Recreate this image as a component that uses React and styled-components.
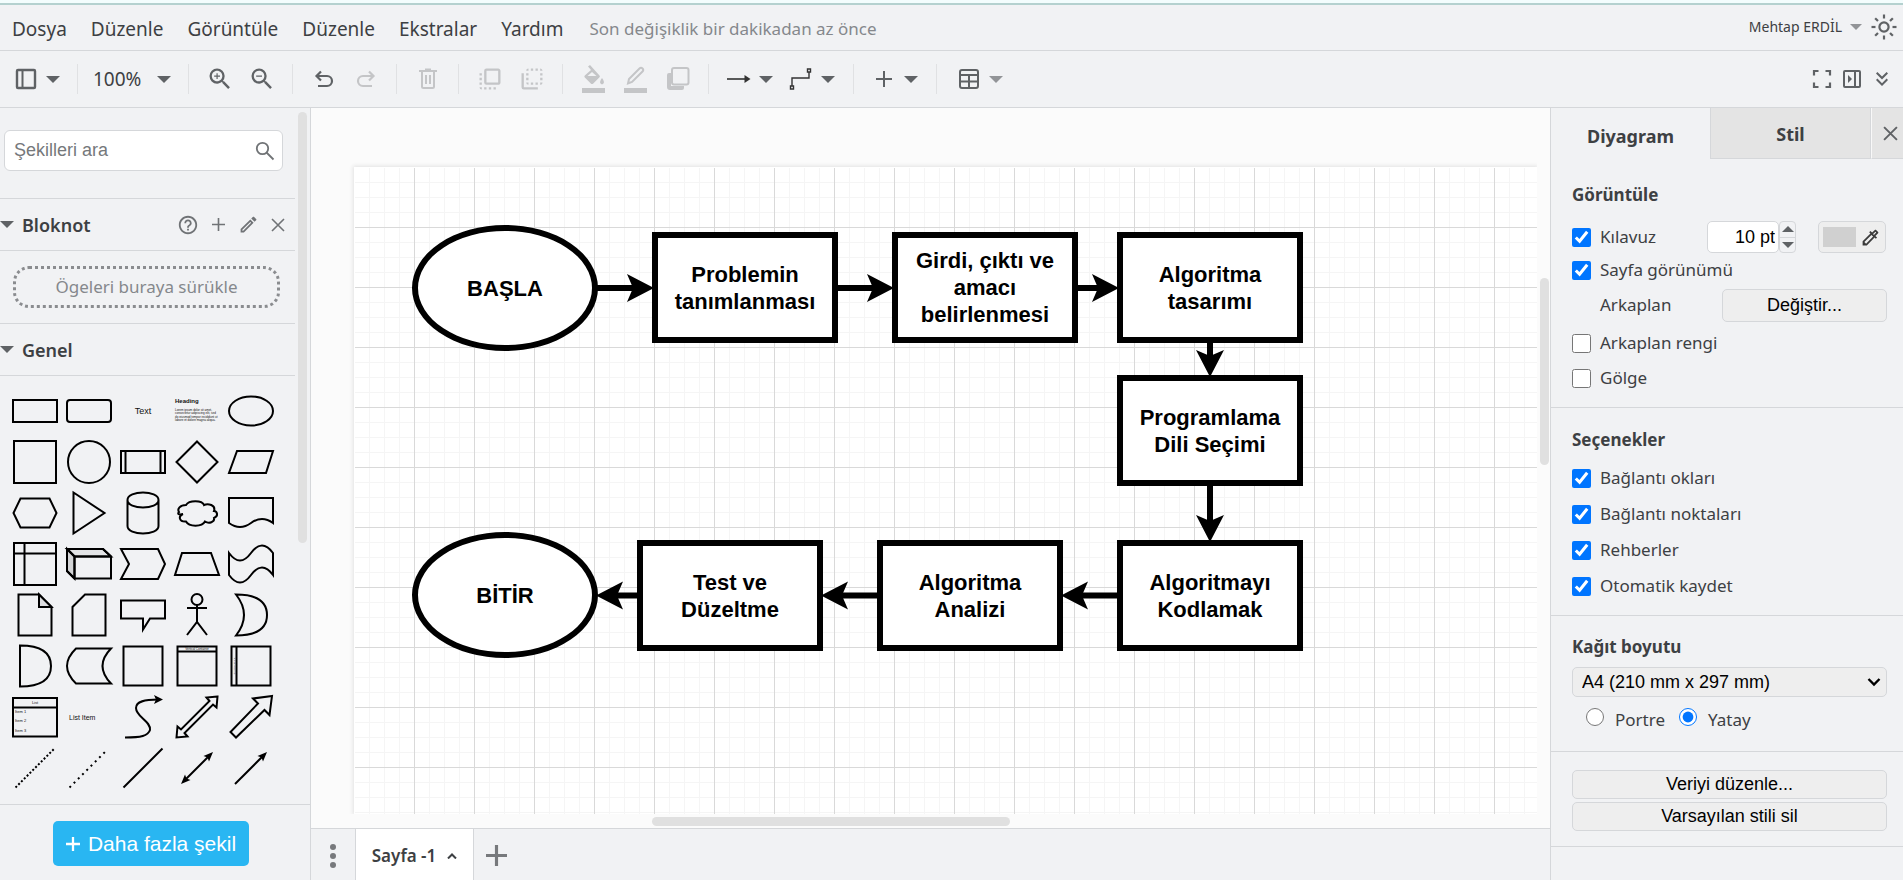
import React, { useState } from "react";
import styled, { createGlobalStyle, css } from "styled-components";
import {
  MdZoomIn,
  MdZoomOut,
  MdFlipToFront,
  MdFlipToBack,
  MdKeyboardDoubleArrowDown,
  MdHelpOutline,
  MdOutlineEdit,
  MdOutlineColorize,
} from "react-icons/md";

const color = {
  chrome: "#f1f2f4",
  canvas: "#fbfbfb",
  line: "#d5d7da",
  soft: "#e0e1e3",
  text: "#3d4043",
  muted: "#85888c",
  icon: "#5f6265",
  off: "#c4c5c7",
  field: "#eeeeee",
  accent: "#29b6f2",
};

const uiFont = `"Noto Sans", "Open Sans", sans-serif`;
const formFont = `"Liberation Sans", Arial, sans-serif`;

const GlobalStyle = createGlobalStyle`
  *, *::before, *::after { box-sizing: border-box; }
  body { margin: 0; background: ${color.chrome}; color: ${color.text}; font-family: ${uiFont}; }
  button, input, select { font: inherit; color: inherit; margin: 0; }
`;

const Shell = styled.div`
  display: flex;
  flex-direction: column;
  height: 100vh;
  overflow: hidden;
  border-top: 3px solid #f3fdfd;
`;

const PlainButton = styled.button`
  display: inline-flex;
  align-items: center;
  justify-content: center;
  padding: 0;
  border: 0;
  background: none;
  cursor: pointer;
`;

/* ---------- menu bar ---------- */

const MenuBar = styled.header`
  display: flex;
  flex: 0 0 48px;
  align-items: center;
  justify-content: space-between;
  padding: 0 5px 0 12px;
  border-top: 2px solid #b4d1cf;
  border-bottom: 1px solid ${color.line};
`;

const MenuNav = styled.nav`
  display: flex;
  align-items: center;
  gap: 24px;
  padding-top: 2px;
`;

const MenuItem = styled(PlainButton)`
  font-size: 19px;
  line-height: 28px;
`;

const SaveStatus = styled.span`
  margin-left: 2px;
  color: ${color.muted};
  font-size: 17px;
  line-height: 28px;
`;

const Account = styled.div`
  display: flex;
  align-items: center;
  gap: 8px;
  padding-bottom: 1px;
`;

const UserButton = styled(PlainButton)`
  gap: 8px;
  font-size: 14px;
  line-height: 20px;
`;

/* ---------- toolbar ---------- */

const Toolbar = styled.div`
  display: flex;
  flex: 0 0 57px;
  align-items: center;
  border-bottom: 1px solid ${color.line};
  color: ${color.icon};
`;

const ToolGroup = styled.div`
  display: flex;
  align-items: center;
  height: 30px;
  gap: ${(p) => p.$gap || 0}px;
  padding: 0 ${(p) => p.$right ?? 9}px 0 ${(p) => p.$left ?? 10}px;
  border-right: ${(p) => (p.$last ? 0 : 1)}px solid ${color.soft};
`;

const ToolButton = styled(PlainButton)`
  width: ${(p) => p.$width || 42}px;
  height: 30px;
  color: ${color.icon};
  &:disabled { color: ${color.off}; }
`;

const DropButton = styled(PlainButton)`
  gap: 8px;
  height: 30px;
`;

const IconSlot = styled.span`
  display: inline-flex;
  justify-content: center;
  width: 24px;
`;

const ZoomText = styled.span`
  width: 50px;
  margin-right: 6px;
  color: ${color.text};
  font-size: 19px;
  line-height: 28px;
  text-align: left;
`;

const ToolbarEnd = styled.div`
  display: flex;
  align-items: center;
  margin-left: auto;
  padding-right: 6px;
`;

/* ---------- body ---------- */

const Body = styled.div`
  display: flex;
  flex: 1;
  min-height: 0;
`;

const Sidebar = styled.aside`
  display: flex;
  flex: 0 0 311px;
  flex-direction: column;
  border-right: 1px solid ${color.line};
`;

const SidebarScroll = styled.div`
  display: flex;
  flex: 1;
  min-height: 0;
`;

const SidebarContent = styled.div`
  flex: 1;
  min-width: 0;
  overflow: hidden;
`;

const SidebarTrack = styled.div`
  display: grid;
  grid-template-rows: 4px 430fr 261fr;
  width: 15px;
  padding: 0 3px;
`;

const Thumb = styled.div`
  grid-area: ${(p) => p.$area};
  border-radius: 5px;
  background: #e0e0e0;
`;

const SearchBox = styled.label`
  display: flex;
  align-items: center;
  height: 41px;
  margin: 22px 12px 27px 4px;
  padding: 0 7px 0 9px;
  border: 1px solid ${color.line};
  border-radius: 6px;
  background: #fff;
  color: #707376;
`;

const SearchInput = styled.input`
  flex: 1;
  min-width: 0;
  padding: 0;
  border: 0;
  outline: 0;
  color: ${color.text};
  font-family: ${formFont};
  font-size: 18px;
  &::placeholder { color: #75787b; opacity: 1; }
`;

const SectionBar = styled.div`
  display: flex;
  align-items: center;
  justify-content: space-between;
  height: 53px;
  padding-right: 6px;
  border-top: 1px solid ${color.line};
  border-bottom: 1px solid ${color.line};
`;

const SectionToggle = styled(PlainButton)`
  gap: 8px;
  font-size: 18px;
  font-weight: 600;
  line-height: 28px;
`;

const SectionActions = styled.div`
  display: flex;
  align-items: center;
  gap: 8px;
  color: #707376;
`;

const ActionButton = styled(PlainButton)`
  width: 22px;
  height: 24px;
  color: inherit;
`;

const DropZone = styled.div`
  margin: 15px 15px 15px 13px;
  border: 3px dotted #8a8c8f;
  border-radius: 16px;
  color: ${color.muted};
  font-size: 17px;
  line-height: 36px;
  text-align: center;
`;

const ShapeGrid = styled.div`
  display: grid;
  grid-template-columns: repeat(5, 54px);
  padding: 9px 0 0 8px;
`;

const ShapeButton = styled(PlainButton)`
  height: 51px;
`;

const ShapeSvg = styled.svg`
  display: block;
  overflow: visible;
  fill: none;
  stroke: #000;
  stroke-width: 2;
  text {
    fill: #111;
    stroke: none;
    font-family: ${formFont};
  }
`;

const SidebarFooter = styled.div`
  display: flex;
  flex: 0 0 76px;
  justify-content: center;
  padding: 16px 8px 14px 0;
  border-top: 1px solid ${color.line};
`;

const MoreShapes = styled(PlainButton)`
  gap: 8px;
  width: 196px;
  border-radius: 5px;
  background: ${color.accent};
  color: #fff;
  font-family: ${formFont};
  font-size: 21px;
`;

/* ---------- canvas ---------- */

const CanvasColumn = styled.main`
  display: flex;
  flex: 1;
  flex-direction: column;
  min-width: 0;
  background: ${color.canvas};
`;

const Workspace = styled.div`
  display: grid;
  flex: 1;
  grid-template-columns: minmax(0, 1fr) 13px;
  grid-template-rows: minmax(0, 1fr) 14px;
  min-height: 0;
`;

const PageViewport = styled.div`
  overflow: hidden;
  padding: 59px 0 0 43px;
`;

const Page = styled.div`
  position: relative;
  height: 100%;
  overflow: hidden;
  border: solid #fff;
  border-width: 1px 0 0 1px;
  box-shadow: 0 0 4px 1px #e2e2e2;
  background-color: #fff;
  background-image:
    linear-gradient(to right, #d9d9d9 1px, transparent 1px),
    linear-gradient(to bottom, #d9d9d9 1px, transparent 1px),
    linear-gradient(to right, #f5f5f5 1px, transparent 1px),
    linear-gradient(to bottom, #f5f5f5 1px, transparent 1px);
  background-size: 60px 60px, 60px 60px, 15px 15px, 15px 15px;
  background-origin: border-box;
`;

const VerticalTrack = styled.div`
  display: grid;
  grid-template-rows: 170fr 187fr 349fr;
  padding: 0 1px 0 3px;
`;

const HorizontalTrack = styled.div`
  display: grid;
  grid-template-columns: 341fr 358fr 527fr;
  padding: 3px 0 2px;
`;

const Edges = styled.svg`
  position: absolute;
  top: -1px;
  left: -1px;
  width: 100%;
  height: 100%;
  overflow: visible;
`;

const Node = styled.div`
  position: absolute;
  top: ${(p) => p.$y - 1}px;
  left: ${(p) => p.$x - 1}px;
  display: flex;
  align-items: center;
  justify-content: center;
  width: 186px;
  height: 111px;
  border: 6px solid #000;
  background: #fff;
  color: #000;
  font-family: ${formFont};
  font-size: 22px;
  font-weight: 700;
  line-height: 27px;
  text-align: center;
  white-space: pre-line;
  ${(p) =>
    p.$round &&
    css`
      height: 126px;
      border-radius: 50%;
    `}
`;

const PageTabs = styled.footer`
  display: flex;
  flex: 0 0 52px;
  align-items: stretch;
  border-top: 1px solid ${color.line};
  background: ${color.chrome};
`;

const PageMenuButton = styled(PlainButton)`
  width: 44px;
  padding-top: 2px;
  color: #77797c;
`;

const PageTab = styled(PlainButton)`
  gap: 11px;
  width: 119px;
  padding-top: 2px;
  border-right: 1px solid ${color.line};
  border-left: 1px solid ${color.line};
  background: #fff;
  font-size: 17px;
  font-weight: 600;
`;

const AddPage = styled(PlainButton)`
  width: 44px;
  padding-top: 2px;
  color: #77797c;
`;

/* ---------- format panel ---------- */

const Panel = styled.aside`
  flex: 0 0 353px;
  overflow: hidden;
  border-left: 1px solid ${color.line};
`;

const Tabs = styled.div`
  display: flex;
  height: 51px;
`;

const Tab = styled(PlainButton)`
  flex: 1;
  padding-top: ${(p) => (p.$active ? 4 : 2)}px;
  font-size: 18px;
  font-weight: 700;
  ${(p) =>
    !p.$active &&
    css`
      border: solid ${color.line};
      border-width: 0 1px 1px;
      background: #e4e4e4;
    `}
`;

const CloseTab = styled(PlainButton)`
  width: 32px;
  padding-left: 6px;
  border-bottom: 1px solid ${color.line};
  border-left: 1px solid #f8f8f8;
  background: #e4e4e4;
  color: ${color.icon};
`;

const PanelSection = styled.section`
  padding: ${(p) => p.$top}px 16px ${(p) => p.$bottom}px 21px;
  border-bottom: 1px solid ${color.line};
`;

const PanelHeading = styled.h2`
  margin: 0 0 ${(p) => p.$gap || 2}px;
  font-size: 17px;
  font-weight: 700;
  line-height: 36px;
`;

const OptionRow = styled.div`
  display: flex;
  align-items: center;
  height: ${(p) => p.$height || 36}px;
`;

const Option = styled.label`
  display: flex;
  flex: 1;
  align-items: center;
  gap: 9px;
  font-size: 17px;
  line-height: 24px;
`;

const Check = styled.input.attrs({ type: "checkbox" })`
  width: 19px;
  height: 19px;
`;

const RowCaption = styled.span`
  flex: 1;
  padding-left: 28px;
  font-size: 17px;
  line-height: 24px;
`;

const SizeInput = styled.input`
  width: 72px;
  height: 32px;
  padding: 0 3px;
  border: 1px solid ${color.line};
  border-radius: 5px;
  background: #fff;
  color: #000;
  font-family: ${formFont};
  font-size: 18px;
  text-align: right;
`;

const Spinner = styled.div`
  display: flex;
  flex-direction: column;
  width: 17px;
  height: 32px;
  margin-right: 22px;
  border: 1px solid ${color.line};
  border-radius: 4px;
`;

const SpinButton = styled(PlainButton)`
  flex: 1;
  & + & { border-top: 1px solid ${color.line}; }
`;

const ColorButton = styled(PlainButton)`
  gap: 4px;
  width: 68px;
  height: 32px;
  margin-right: 1px;
  border: 1px solid ${color.line};
  border-radius: 5px;
  background: ${color.field};
  color: #3a3a3a;
`;

const Swatch = styled.span`
  width: 33px;
  height: 20px;
  background: #d0d0d0;
`;

const FormButton = styled(PlainButton)`
  width: ${(p) => p.$width || "100%"};
  height: ${(p) => p.$height || 29}px;
  border: 1px solid ${color.line};
  border-radius: 5px;
  background: ${color.field};
  color: #000;
  font-family: ${formFont};
  font-size: 18px;
  & + & { margin-top: 3px; }
`;

const SelectWrap = styled.div`
  display: grid;
  grid-template-columns: 1fr 14px 6px;
  align-items: center;
  color: #000;
  svg { grid-area: 1 / 2; pointer-events: none; }
`;

const PaperSelect = styled.select`
  grid-area: 1 / 1 / 2 / 4;
  height: 30px;
  padding: 0 24px 0 9px;
  border: 1px solid ${color.line};
  border-radius: 5px;
  appearance: none;
  background-color: ${color.field};
  color: #000;
  font-family: ${formFont};
  font-size: 18px;
`;

const RadioRow = styled.div`
  display: flex;
  gap: 14px;
  height: 40px;
  padding: 5px 0 0 14px;
`;

const RadioOption = styled.label`
  display: flex;
  align-items: center;
  gap: 11px;
  font-size: 17px;
  line-height: 24px;
`;

const Radio = styled.input.attrs({ type: "radio" })`
  width: 18px;
  height: 18px;
  margin-bottom: 6px;
`;

/* ---------- small drawings ---------- */

const Caret = ({ size = 14, fill = color.icon, up }) => (
  <svg width={size} height={size / 2} viewBox="0 0 14 7">
    <path d={up ? "M0 7h14L7 0z" : "M0 0h14L7 7z"} fill={fill} />
  </svg>
);

const Line = ({ w = 22, h = w, box = `0 0 ${w} ${h}`, sw = 2, children }) => (
  <svg width={w} height={h} viewBox={box} fill="none" stroke="currentColor" strokeWidth={sw}>
    {children}
  </svg>
);

const LayoutIcon = () => (
  <Line>
    <rect x="2" y="2" width="18" height="18" rx="1" strokeWidth="2.4" />
    <path d="M7.5 2v18" />
  </Line>
);
const UndoIcon = ({ flip }) => (
  <Line w={20} h={18} sw={2.2}>
    <g transform={flip ? "matrix(-1 0 0 1 20 0)" : undefined}>
      <path d="M7 1.5 2.5 6 7 10.500M3 6h10a5 5 0 0 1 0 10H4" />
    </g>
  </Line>
);
const TrashIcon = () => (
  <Line w={20} h={22}>
    <path d="M1 3h18M7 1.500h6M4 3v15.500q0 1.500 1.500 1.500h9q1.500 0 1.500-1.500V3M8 7v9M12 7v9" />
  </Line>
);
const FillIcon = () => (
  <svg width="24" height="28" viewBox="0 0 24 28" fill="currentColor">
    <path d="M6 1.500 8 0l9.500 10.500q1 1-.2 2l-6 6q-1.300 1-2.500 0l-6-6q-1-1 0-2L9 5zM10 7l-4.500 4h9z" />
    <path d="M20 13q4 5 0 6.500q-4-1.500 0-6.500z" />
    <path d="M0 23h23v5H0z" />
  </svg>
);
const PenIcon = () => (
  <svg width="24" height="28" viewBox="0 0 24 28">
    <path d="M4 18.500 5 14 15.500 3.500q1.500-1.500 3 0t0 3L8 17z" fill="none" stroke="currentColor" strokeWidth="2" />
    <path d="M0 23h23v5H0z" fill="currentColor" />
  </svg>
);
const ShadowIcon = () => (
  <svg width="24" height="24" viewBox="0 0 24 24">
    <rect x="6" y="1" width="16.500" height="16.500" rx="2" fill="none" stroke="currentColor" strokeWidth="2" />
    <path d="M1 8q0-2 2-2h2v13h13v2q0 2-2 2H4q-3 0-3-3z" fill="currentColor" />
  </svg>
);
const ArrowIcon = () => (
  <Line w={24} h={10} sw={1.6}>
    <path d="M0 5h20" stroke="#333" />
    <path d="M17.500 1v8l6-4z" fill="#333" stroke="none" />
  </Line>
);
const ConnectorIcon = () => (
  <Line w={24} h={24} sw={1.4}>
    <path d="M3 19v-8h17V5M1.500 19h3v3h-3zM18.500 2h3v3h-3z" stroke="#333" />
  </Line>
);
const PlusIcon = ({ size = 16, sw = 2 }) => (
  <Line w={size} box="0 0 16 16" sw={sw}>
    <path d="M8 0v16M0 8h16" />
  </Line>
);
const TableIcon = () => (
  <Line w={22} h={22}>
    <rect x="2" y="2" width="18" height="18" rx="2" />
    <path d="M2 7h18M2 13.500h18M11 7v13" />
  </Line>
);
const CrossIcon = ({ size = 14, sw = 1.6 }) => (
  <Line w={size} box="0 0 14 14" sw={sw}>
    <path d="M1 1l12 12M13 1 1 13" />
  </Line>
);
const SearchIcon = () => (
  <Line w={20} h={20} sw={1.800}>
    <circle cx="7.500" cy="7.500" r="5.700" />
    <path d="M11.500 11.500 18.500 18.500" />
  </Line>
);
const SunIcon = () => (
  <Line w={26} box="-13 -13 26 26" sw={2.2}>
    <circle r="4.600" />
    {[0, 45, 90, 135, 180, 225, 270, 315].map((a) => (
      <path key={a} d="M0-8.500v-4" transform={`rotate(${a})`} />
    ))}
  </Line>
);
const FullscreenIcon = () => (
  <Line w={20} h={20} sw={2.2}>
    <path d="M2 6.500V2h4.500M13.500 2H18v4.500M18 13.500V18h-4.500M6.500 18H2v-4.500" />
  </Line>
);
const PanelIcon = () => (
  <Line w={20} h={20}>
    <rect x="2" y="2" width="16" height="16" rx="1" />
    <path d="M13 2v16" />
    <path d="M6 6v8l4-4z" fill="currentColor" stroke="none" />
  </Line>
);
const DotsIcon = () => (
  <svg width="8" height="26" viewBox="0 0 8 26" fill="currentColor">
    <circle cx="4" cy="4" r="3" />
    <circle cx="4" cy="13" r="3" />
    <circle cx="4" cy="22" r="3" />
  </svg>
);
const UpIcon = () => (
  <Line w={10} h={6} sw={2}>
    <path d="M1 5.500 5 1.500 9 5.500" />
  </Line>
);
const SelectIcon = () => (
  <Line w={14} h={10} sw={2.4}>
    <path d="M1.500 2 7 7.500 12.500 2" />
  </Line>
);

/* ---------- shape palette ---------- */

const shapes = [
  ["rectangle", <path d="M-22-11h44v22h-44z" />],
  ["rounded", <rect x="-22" y="-11" width="44" height="22" rx="3" />],
  ["text", <text x="0" y="3" fontSize="9" textAnchor="middle">Text</text>],
  ["textbox", (
    <>
      <text x="-22" y="-8" fontSize="6" fontWeight="700">Heading</text>
      <text x="-22" y="0" fontSize="3">Lorem ipsum dolor sit amet,</text>
      <text x="-22" y="3" fontSize="3">consectetur adipiscing elit, sed</text>
      <text x="-22" y="7" fontSize="3">do eiusmod tempor incididunt ut</text>
      <text x="-22" y="10" fontSize="3">labore et dolore magna aliqua.</text>
    </>
  )],
  ["ellipse", <ellipse rx="22" ry="14.500" />],
  ["square", <path d="M-21-21h42v42h-42z" />],
  ["circle", <circle r="21" />],
  ["process", <path d="M-22-11h44v22h-44zM-17.500-11v22M17.500-11v22" />],
  ["diamond", <path d="M0-20.500 20.500 0 0 20.500-20.500 0z" />],
  ["parallelogram", <path d="M-14-11h36l-7 22h-37z" />],
  ["hexagon", <path d="M-14.500-14.500h29l7 14.500-7 14.500h-29l-7-14.500z" />],
  ["triangle", <path d="M-15.500-20.500 15.500 0-15.500 20.500z" />],
  ["cylinder", <path d="M-15.500-13c0-10 31-10 31 0v26c0 10-31 10-31 0zc0 10 31 10 31 0" />],
  ["cloud", <path d="M-11-8C-17-8-20-4-18-1C-20 1-18 2-14 1C-19 3-18 9-11 8.500C-8 14 5 14 8 8.500C12 11 18 9 17 5C22 3 20-2 17-2C19-8 11-10 7-8C5-13-8-13-11-8z" />],
  ["document", <path d="M-22-15h44v25q-11-8-22 0t-22 0z" />],
  ["storage", <path d="M-21-21h42v42h-42zM-10.500-21v42M-21-10.500h42" />],
  ["cube", (
    <>
      <path d="M-22-15h36l8 7.500h-36.500z" fill="#e3e4e6" />
      <path d="M-22-15v22l7.500 7.500v-22z" fill="#d3d4d6" />
      <path d="M-22-15h36l8 7.500v22h-36.500l-7.500-7.500zM-22-15l7.500 7.500v22M-14.500-7.500h36.500" />
    </>
  )],
  ["step", <path d="M-22-15h37l7 15-7 15h-37l8-15z" />],
  ["trapezoid", <path d="M-15-11h29l8 22h-44z" />],
  ["tape", <path d="M-22-11Q-11 4 0-11T22-11V11Q11-4 0 11T-22 11z" />],
  ["note", (
    <>
      <path d="M-16.500-20.500h20.500l12.500 12.500v28.500h-33z" />
      <path d="M4-20.500v12.500h12.500z" fill="#dddee0" />
    </>
  )],
  ["card", <path d="M-4-20.500h20.500v41h-33v-28.500z" />],
  ["callout", <path d="M-22-14.500h44v18h-15l-7 11v-11h-22z" />],
  ["actor", (
    <>
      <circle cy="-15.500" r="5.500" />
      <path d="M0-10v17M-10-7h20M-10 20 0 7 10 20" />
    </>
  )],
  ["or", <path d="M-15-20.500Q16-20.500 16 0T-15 20.500Q1 0-15-20.500z" />],
  ["and", <path d="M-15-20.500Q16-20.500 16 0T-15 20.500z" />],
  ["data", <path d="M-13-17.500h35q-17 17.500 0 35h-35q-18-17.500 0-35z" />],
  ["container", <path d="M-19.500-19.500h39v39h-39z" />],
  ["vertical", (
    <>
      <path d="M-19.500-19.500h39v39h-39zM-19.500-14.500h39" />
      <text x="0" y="-16" fontSize="3" textAnchor="middle">Vertical Container</text>
    </>
  )],
  ["horizontal", (
    <>
      <path d="M-19.500-19.500h39v39h-39zM-14.500-19.500v39" />
      <text x="0" y="-16" fontSize="2" textAnchor="middle" transform="rotate(-90)">Horizontal Container</text>
    </>
  )],
  ["list", (
    <>
      <path d="M-22-19h44v38.500h-44zM-22-9.500h44" />
      <text x="0" y="-13" fontSize="4" textAnchor="middle">List</text>
      <text x="-20" y="-4" fontSize="4">Item 1</text>
      <text x="-20" y="5" fontSize="4">Item 2</text>
      <text x="-20" y="15" fontSize="4">Item 3</text>
    </>
  )],
  ["item", <text x="-20" y="3" fontSize="7">List Item</text>],
  ["curve", (
    <>
      <path d="M-18 20.500C-2 20.500 5 19 7 13C8 4-7 0-7-9C-7-16 2-17.500 15-17.500" />
      <path d="M20-17.500 11-22l2 4.500-2 4.500z" fill="#000" stroke="none" />
    </>
  )],
  ["both", <path d="M20.500-20.500 9.500-19.500 12.500-16-16 12.500-19.500 9.500-20.500 20.500-9.500 19.500-12.500 16 16-12.500 19.500-9.500z" />],
  ["arrow", <path d="M21-21 2-18.500 7-13.500-20.500 15-15 20.500 13.500-7 18.500-2z" />],
  ["dashed", <path d="M-19.500 19.500 19.500-19.500" strokeDasharray="2 2" />],
  ["dotted", <path d="M-19.500 19.500 17-17" strokeDasharray="2 4" />],
  ["line", <path d="M-19.500 19.500 19.500-19.500" />],
  ["bidirectional", (
    <>
      <path d="M-12 12 12-12" />
      <path d="M16-16 6.500-12l4 1.500 1.500 4zM-16 16-12 6.500l1.500 4 4 1.500z" fill="#000" stroke="none" />
    </>
  )],
  ["directional", (
    <>
      <path d="M-16 16 12-12" />
      <path d="M16-16 6.500-12l4 1.500 1.500 4z" fill="#000" stroke="none" />
    </>
  )],
];

/* ---------- diagram data, in page coordinates ---------- */

const nodes = [
  { x: 58, y: 58, text: "BAŞLA", round: true },
  { x: 298, y: 65, text: "Problemin\ntanımlanması" },
  { x: 538, y: 65, text: "Girdi, çıktı ve\namacı\nbelirlenmesi" },
  { x: 763, y: 65, text: "Algoritma\ntasarımı" },
  { x: 763, y: 208, text: "Programlama\nDili Seçimi" },
  { x: 763, y: 373, text: "Algoritmayı\nKodlamak" },
  { x: 523, y: 373, text: "Algoritma\nAnalizi" },
  { x: 283, y: 373, text: "Test ve\nDüzeltme" },
  { x: 58, y: 365, text: "BİTİR", round: true },
];

/* tip of each arrow, its direction in degrees and its length */
const edges = [
  { x: 300, y: 121, angle: 0, length: 58 },
  { x: 540, y: 121, angle: 0, length: 58 },
  { x: 765, y: 121, angle: 0, length: 43 },
  { x: 856, y: 210, angle: 90, length: 36 },
  { x: 856, y: 375, angle: 90, length: 58 },
  { x: 707, y: 428.5, angle: 180, length: 58 },
  { x: 467, y: 428.5, angle: 180, length: 58 },
  { x: 242, y: 428.5, angle: 180, length: 43 },
];

const menus = ["Dosya", "Düzenle", "Görüntüle", "Düzenle", "Ekstralar", "Yardım"];
const options = ["Bağlantı okları", "Bağlantı noktaları", "Rehberler", "Otomatik kaydet"];

function CheckOption({ label, checked }) {
  return (
    <Option>
      <Check defaultChecked={checked} />
      {label}
    </Option>
  );
}

function Drop({ icon, muted, label }) {
  return (
    <DropButton aria-label={label}>
      <IconSlot>{icon}</IconSlot>
      <Caret fill={muted ? "#929497" : color.icon} />
    </DropButton>
  );
}

function TopBar() {
  return (
    <MenuBar>
      <MenuNav>
        {menus.map((name, i) => (
          <MenuItem key={i}>{name}</MenuItem>
        ))}
        <SaveStatus>Son değişiklik bir dakikadan az önce</SaveStatus>
      </MenuNav>
      <Account>
        <UserButton>
          Mehtap ERDİL
          <Caret size={12} fill="#929497" />
        </UserButton>
        <ToolButton $width={28} aria-label="Tema"><SunIcon /></ToolButton>
      </Account>
    </MenuBar>
  );
}

function Tools() {
  return (
    <Toolbar>
      <ToolGroup $left={14} $right={17}>
        <Drop label="Düzen" icon={<LayoutIcon />} />
      </ToolGroup>
      <ToolGroup $left={15} $right={17}>
        <DropButton>
          <ZoomText>100%</ZoomText>
          <Caret />
        </DropButton>
      </ToolGroup>
      <ToolGroup>
        <ToolButton aria-label="Yakınlaştır"><MdZoomIn size={28} /></ToolButton>
        <ToolButton aria-label="Uzaklaştır"><MdZoomOut size={28} /></ToolButton>
      </ToolGroup>
      <ToolGroup>
        <ToolButton aria-label="Geri al"><UndoIcon /></ToolButton>
        <ToolButton aria-label="Yinele" disabled><UndoIcon flip /></ToolButton>
      </ToolGroup>
      <ToolGroup>
        <ToolButton aria-label="Sil" disabled><TrashIcon /></ToolButton>
      </ToolGroup>
      <ToolGroup>
        <ToolButton aria-label="Öne getir" disabled><MdFlipToFront size={28} /></ToolButton>
        <ToolButton aria-label="Arkaya gönder" disabled><MdFlipToBack size={28} /></ToolButton>
      </ToolGroup>
      <ToolGroup>
        <ToolButton aria-label="Dolgu rengi" disabled><FillIcon /></ToolButton>
        <ToolButton aria-label="Çizgi rengi" disabled><PenIcon /></ToolButton>
        <ToolButton aria-label="Gölge" disabled><ShadowIcon /></ToolButton>
      </ToolGroup>
      <ToolGroup $left={18} $right={18} $gap={16}>
        <Drop label="Bağlantı" icon={<ArrowIcon />} />
        <Drop label="Yol" icon={<ConnectorIcon />} />
      </ToolGroup>
      <ToolGroup $left={18} $right={18}>
        <Drop label="Ekle" icon={<PlusIcon />} />
      </ToolGroup>
      <ToolGroup $left={20} $last>
        <Drop label="Tablo" icon={<TableIcon />} muted />
      </ToolGroup>
      <ToolbarEnd>
        <ToolButton $width={30} aria-label="Tam ekran"><FullscreenIcon /></ToolButton>
        <ToolButton $width={30} aria-label="Biçim paneli"><PanelIcon /></ToolButton>
        <ToolButton $width={30} aria-label="Daralt"><MdKeyboardDoubleArrowDown size={24} /></ToolButton>
      </ToolbarEnd>
    </Toolbar>
  );
}

function ShapeSidebar() {
  return (
    <Sidebar>
      <SidebarScroll>
        <SidebarContent>
          <SearchBox>
            <SearchInput aria-label="Şekilleri ara" placeholder="Şekilleri ara" />
            <SearchIcon />
          </SearchBox>
          <SectionBar>
            <SectionToggle><Caret />Bloknot</SectionToggle>
            <SectionActions>
              <ActionButton aria-label="Yardım"><MdHelpOutline size={24} /></ActionButton>
              <ActionButton aria-label="Ekle"><PlusIcon size={13} sw={2} /></ActionButton>
              <ActionButton aria-label="Düzenle"><MdOutlineEdit size={21} /></ActionButton>
              <ActionButton aria-label="Kapat"><CrossIcon /></ActionButton>
            </SectionActions>
          </SectionBar>
          <DropZone>Ögeleri buraya sürükle</DropZone>
          <SectionBar>
            <SectionToggle><Caret />Genel</SectionToggle>
          </SectionBar>
          <ShapeGrid>
            {shapes.map(([name, drawing]) => (
              <ShapeButton key={name} aria-label={name}>
                <ShapeSvg width="54" height="50" viewBox="-27 -25 54 50">{drawing}</ShapeSvg>
              </ShapeButton>
            ))}
          </ShapeGrid>
        </SidebarContent>
        <SidebarTrack><Thumb $area="2 / 1" /></SidebarTrack>
      </SidebarScroll>
      <SidebarFooter>
        <MoreShapes><PlusIcon size={14} sw={2.6} />Daha fazla şekil</MoreShapes>
      </SidebarFooter>
    </Sidebar>
  );
}

function Canvas() {
  return (
    <CanvasColumn>
      <Workspace>
        <PageViewport>
          <Page>
            <Edges>
              {edges.map((e, i) => (
                <g key={i} transform={`translate(${e.x} ${e.y}) rotate(${e.angle})`}>
                  <path d={`M${-e.length} 0H-18`} stroke="#000" strokeWidth="6" />
                  <path d="M0 0-27-14-21 0-27 14z" />
                </g>
              ))}
            </Edges>
            {nodes.map((n, i) => (
              <Node key={i} $x={n.x} $y={n.y} $round={n.round}>{n.text}</Node>
            ))}
          </Page>
        </PageViewport>
        <VerticalTrack><Thumb $area="2 / 1" /></VerticalTrack>
        <HorizontalTrack><Thumb $area="1 / 2" /></HorizontalTrack>
      </Workspace>
      <PageTabs>
        <PageMenuButton aria-label="Sayfalar"><DotsIcon /></PageMenuButton>
        <PageTab>Sayfa -1<UpIcon /></PageTab>
        <AddPage aria-label="Sayfa ekle"><PlusIcon size={21} sw={2.4} /></AddPage>
      </PageTabs>
    </CanvasColumn>
  );
}

function FormatPanel() {
  const [paper, setPaper] = useState("a4");
  return (
    <Panel>
      <Tabs>
        <Tab $active>Diyagram</Tab>
        <Tab>Stil</Tab>
        <CloseTab aria-label="Kapat"><CrossIcon size={15} sw={1.8} /></CloseTab>
      </Tabs>
      <PanelSection $top={18} $bottom={12}>
        <PanelHeading $gap={6}>Görüntüle</PanelHeading>
        <OptionRow>
          <CheckOption label="Kılavuz" checked />
          <SizeInput aria-label="Kılavuz boyutu" defaultValue="10 pt" />
          <Spinner>
            <SpinButton aria-label="Artır"><Caret size={12} up /></SpinButton>
            <SpinButton aria-label="Azalt"><Caret size={12} /></SpinButton>
          </Spinner>
          <ColorButton aria-label="Kılavuz rengi"><Swatch /><MdOutlineColorize size={21} /></ColorButton>
        </OptionRow>
        <OptionRow $height={30}><CheckOption label="Sayfa görünümü" checked /></OptionRow>
        <OptionRow $height={40}>
          <RowCaption>Arkaplan</RowCaption>
          <FormButton $width="165px" $height={33}>Değiştir...</FormButton>
        </OptionRow>
        <OptionRow><CheckOption label="Arkaplan rengi" /></OptionRow>
        <OptionRow $height={34}><CheckOption label="Gölge" /></OptionRow>
      </PanelSection>
      <PanelSection $top={14} $bottom={11}>
        <PanelHeading>Seçenekler</PanelHeading>
        {options.map((label) => (
          <OptionRow key={label}><CheckOption label={label} checked /></OptionRow>
        ))}
      </PanelSection>
      <PanelSection $top={13} $bottom={14}>
        <PanelHeading>Kağıt boyutu</PanelHeading>
        <SelectWrap>
          <PaperSelect aria-label="Kağıt boyutu" value={paper} onChange={(e) => setPaper(e.target.value)}>
            <option value="a4">A4 (210 mm x 297 mm)</option>
          </PaperSelect>
          <SelectIcon />
        </SelectWrap>
        <RadioRow>
          <RadioOption><Radio name="orientation" />Portre</RadioOption>
          <RadioOption><Radio name="orientation" defaultChecked />Yatay</RadioOption>
        </RadioRow>
      </PanelSection>
      <PanelSection $top={18} $bottom={15}>
        <FormButton>Veriyi düzenle...</FormButton>
        <FormButton>Varsayılan stili sil</FormButton>
      </PanelSection>
    </Panel>
  );
}

export default function App() {
  return (
    <>
      <GlobalStyle />
      <Shell>
        <TopBar />
        <Tools />
        <Body>
          <ShapeSidebar />
          <Canvas />
          <FormatPanel />
        </Body>
      </Shell>
    </>
  );
}
